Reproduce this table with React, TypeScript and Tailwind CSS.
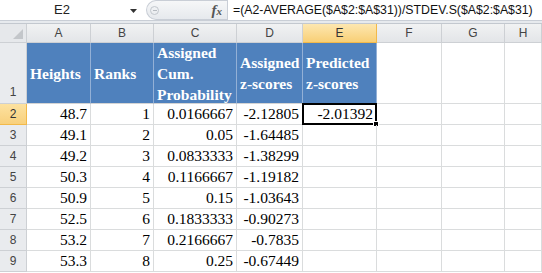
import React from 'react';

const COLS = ['A', 'B', 'C', 'D', 'E', 'F', 'G', 'H'];

const ROWS: (string | null)[][] = [
  ['48.7', '1', '0.0166667', '-2.12805', '-2.01392'],
  ['49.1', '2', '0.05', '-1.64485', null],
  ['49.2', '3', '0.0833333', '-1.38299', null],
  ['50.3', '4', '0.1166667', '-1.19182', null],
  ['50.9', '5', '0.15', '-1.03643', null],
  ['52.5', '6', '0.1833333', '-0.90273', null],
  ['53.2', '7', '0.2166667', '-0.7835', null],
  ['53.3', '8', '0.25', '-0.67449', null],
];

const HEADERS = [
  ['Heights'],
  ['Ranks'],
  ['Assigned', 'Cum.', 'Probability'],
  ['Assigned', 'z-scores'],
  ['Predicted', 'z-scores'],
];

const FormulaBar: React.FC = () => (
  <div className="flex h-[21px] bg-white border-b border-[#c9ced6] font-['Liberation_Sans']">
    <div className="relative w-[146px] flex items-center justify-center text-[13px] text-[#222]">
      <span className="pr-[22px]">E2</span>
      <svg className="absolute right-[9px] top-[9px]" width="7" height="4" viewBox="0 0 7 4">
        <path d="M0 0h7L3.5 4z" fill="#333" />
      </svg>
    </div>
    <div className="w-[81px] flex items-center rounded-l-full bg-gradient-to-b from-[#f6f7f8] to-[#e6e9ed] border border-r-0 border-[#c9ced6]">
      <div className="ml-[3px] w-[9px] h-[9px] rounded-full border border-[#c2c7cd] flex items-center justify-center">
        <div className="w-[4px] h-px bg-[#b5bac0]" />
      </div>
      <span className="ml-auto mr-[5px] text-[15px] italic font-bold text-[#555] font-['Liberation_Serif']">
        f<span className="text-[11px]">x</span>
      </span>
    </div>
    <div className="flex-1 flex items-center border-l border-[#c9ced6] pl-[5px] text-[12.3px] text-[#111] whitespace-nowrap overflow-hidden">
      =(A2-AVERAGE($A$2:$A$31))/STDEV.S($A$2:$A$31)
    </div>
  </div>
);

const ColHeader: React.FC<{ label: string; active?: boolean }> = ({ label, active }) => (
  <div
    className={
      active
        ? 'flex items-center justify-center border-r border-b border-[#f2b94a] bg-gradient-to-b from-[#fde7b0] to-[#f8cf75] text-[12px] text-[#333]'
        : 'flex items-center justify-center border-r border-b border-[#cdd0d4] bg-gradient-to-b from-[#f1f2f3] to-[#e3e5e8] text-[12px] text-[#444]'
    }
  >
    {label}
  </div>
);

const RowHeader: React.FC<{ n: number; active?: boolean; bottom?: boolean }> = ({ n, active, bottom }) => (
  <div
    className={
      (active
        ? 'border-r border-b border-[#f2b94a] bg-gradient-to-b from-[#fde2a0] to-[#f8d07c] text-[#333] '
        : 'border-r border-b border-[#cdd0d4] bg-[#e9ebee] text-[#444] ') +
      'flex justify-center text-[12px] ' +
      (bottom ? 'items-end pb-[2px]' : 'items-center')
    }
  >
    {n}
  </div>
);

export default function App() {
  return (
    <div className="w-[542px] h-[273px] overflow-hidden bg-white">
      <FormulaBar />
      <div className="h-[3px] bg-[#e7eaee] border-b border-[#c3c8cf]" />
      <div className="grid grid-cols-[27px_64px_63px_83px_66px_74px_65px_63px_1fr] grid-rows-[19px_61px_repeat(8,21px)] font-['Liberation_Sans']">
        <div className="relative border-r border-b border-[#cdd0d4] bg-[#e6e8eb]">
          <svg className="absolute right-[3px] bottom-[3px]" width="10" height="10" viewBox="0 0 10 10">
            <path d="M10 0v10H0z" fill="#c3c6ca" />
          </svg>
        </div>
        {COLS.map((c) => (
          <ColHeader key={c} label={c} active={c === 'E'} />
        ))}

        <RowHeader n={1} bottom />
        {HEADERS.map((lines, i) => (
          <div
            key={i}
            className="flex flex-col justify-center bg-[#4f81bd] border-r border-b border-r-[#93b0d6] border-b-[#d4d4d4] pl-[3px] text-[15.5px] leading-[21px] font-bold text-white whitespace-nowrap overflow-hidden font-['Liberation_Serif']"
          >
            {lines.map((l) => (
              <span key={l}>{l}</span>
            ))}
          </div>
        ))}
        {['F', 'G', 'H'].map((c) => (
          <div key={c} className="border-r border-b border-[#dadcdd]" />
        ))}

        {ROWS.map((row, r) => (
          <React.Fragment key={r}>
            <RowHeader n={r + 2} active={r === 0} />
            {row.map((v, ci) => (
              <div
                key={ci}
                className="relative flex items-center justify-end pr-[3px] border-r border-b border-[#dadcdd] text-[15.5px] text-black whitespace-nowrap font-['Liberation_Serif']"
              >
                {v}
                {r === 0 && ci === 4 && (
                  <div className="absolute -left-px -top-px -right-px -bottom-px border-2 border-black">
                    <div className="absolute -right-[4px] -bottom-[4px] w-[6px] h-[6px] bg-black border border-white" />
                  </div>
                )}
              </div>
            ))}
            {['F', 'G', 'H'].map((c) => (
              <div key={c} className="border-r border-b border-[#dadcdd]" />
            ))}
          </React.Fragment>
        ))}
      </div>
    </div>
  );
}
